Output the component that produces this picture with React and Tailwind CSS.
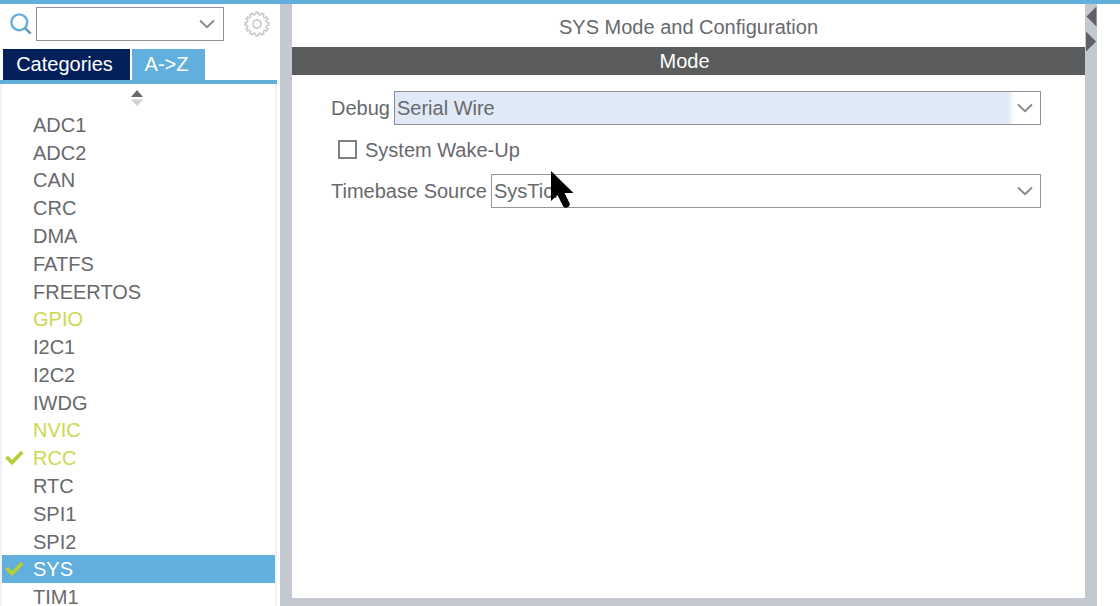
import React, { useState } from "react"

const peripherals = [
  { name: "ADC1" },
  { name: "ADC2" },
  { name: "CAN" },
  { name: "CRC" },
  { name: "DMA" },
  { name: "FATFS" },
  { name: "FREERTOS" },
  { name: "GPIO", active: true },
  { name: "I2C1" },
  { name: "I2C2" },
  { name: "IWDG" },
  { name: "NVIC", active: true },
  { name: "RCC", active: true, checked: true },
  { name: "RTC" },
  { name: "SPI1" },
  { name: "SPI2" },
  { name: "SYS", checked: true },
  { name: "TIM1" },
]

function Chevron({ className }) {
  return (
    <svg className={className} width="16" height="10" viewBox="0 0 16 10" fill="none" aria-hidden="true">
      <path d="M1 1.5 L8 8.2 L15 1.5" stroke="#85878a" strokeWidth="1.8" />
    </svg>
  )
}

function SearchIcon() {
  return (
    <svg width="22" height="22" viewBox="0 0 22 22" fill="none" aria-hidden="true">
      <circle cx="9.3" cy="9.3" r="7.9" stroke="#62afdd" strokeWidth="2.4" />
      <path d="M15 15 L20.7 20.7" stroke="#7499b3" strokeWidth="2.6" />
    </svg>
  )
}

function GearIcon() {
  const teeth = [0, 30, 60, 90, 120, 150, 180, 210, 240, 270, 300, 330]
  return (
    <svg width="26" height="26" viewBox="0 0 26 26" fill="none" stroke="#c9cacb" strokeWidth="1.7" aria-hidden="true">
      {teeth.map((deg) => (
        <path
          key={deg}
          transform={`rotate(${deg} 13 13)`}
          d="M10.4 3.7 Q11.5 3.5 11.6 2.6 L11.8 1.3 H14.2 L14.4 2.6 Q14.5 3.5 15.6 3.7"
        />
      ))}
      <circle cx="13" cy="13" r="4.1" strokeWidth="1.7" />
    </svg>
  )
}

function CheckMark() {
  return (
    <svg width="19" height="16" viewBox="0 0 19 16" fill="none" aria-hidden="true">
      <path d="M1.5 7 L7 12.6 L17.2 2" stroke="#b5cf36" strokeWidth="3.8" />
    </svg>
  )
}

function Pointer() {
  return (
    <svg
      className="pointer-events-none absolute left-[258px] top-[166px]"
      width="25"
      height="40"
      viewBox="0 0 25 40"
      aria-hidden="true"
    >
      <path d="M1 1 L1 31 L7.5 25 L13 36 Q14 38.5 17 37.5 Q20.5 36 19.5 33 L14.5 23 L23.5 23 Z" fill="#000" />
    </svg>
  )
}

function SelectField({ id, label, options, highlighted }) {
  return (
    <div className="flex h-[34px] items-center gap-1">
      <label htmlFor={id}>{label}</label>
      <div className="relative h-full flex-1">
        <select
          id={id}
          className={
            highlighted
              ? "h-full w-full appearance-none rounded-none border border-[#8d8f94] bg-linear-to-r from-[#e0eaf6] from-95% to-white to-96% pl-0.5 outline-none"
              : "h-full w-full appearance-none rounded-none border border-[#949699] bg-white pl-0.5 outline-none"
          }
        >
          {options.map((option) => (
            <option key={option}>{option}</option>
          ))}
        </select>
        <Chevron className="pointer-events-none absolute right-2 top-3" />
      </div>
    </div>
  )
}

function Sidebar() {
  const [selected, setSelected] = useState("SYS")

  return (
    <aside className="flex w-[280px] shrink-0 flex-col">
      <div className="flex items-center pl-[10px] pt-[3px]">
        <label htmlFor="search" className="w-[26px]" aria-label="Search">
          <SearchIcon />
        </label>
        <div className="flex h-[34px] w-[188px] items-center border border-[#8d8f92]">
          <input id="search" type="text" className="h-full min-w-0 flex-1 px-1 outline-none" />
          <button type="button" className="px-2" aria-label="Show history">
            <Chevron />
          </button>
        </div>
        <button type="button" className="ml-5" aria-label="Settings">
          <GearIcon />
        </button>
      </div>

      <div className="mr-[3px] mt-2 flex h-[35px] gap-0.5 border-b-4 border-[#60afdc] pl-[3px] text-white">
        <button type="button" className="w-[127px] bg-[#04205a] pb-0.5 pr-1">
          Categories
        </button>
        <button type="button" className="w-[73px] bg-[#60afdc] pb-0.5 pr-1">
          A-&gt;Z
        </button>
      </div>

      <div className="mr-[3px] flex min-h-0 flex-1 flex-col border-x-2 border-[#f1f2f5]">
        <button type="button" className="flex h-[27px] shrink-0 items-center justify-center pr-1" aria-label="Sort">
          <svg width="14" height="18" viewBox="0 0 14 18" aria-hidden="true">
            <path d="M7 1 L13 8 H1 Z" fill="#66686b" />
            <path d="M1 10.5 H13 L7 17 Z" fill="#d0d1d3" />
          </svg>
        </button>
        <ul className="grid h-[500px] shrink-0 auto-rows-fr">
          {peripherals.map((item) => {
            const isSelected = item.name === selected
            return (
              <li key={item.name}>
                <button
                  type="button"
                  onClick={() => setSelected(item.name)}
                  className={
                    isSelected
                      ? "flex h-full w-full items-center bg-[#60afdc] pl-[3px] text-white"
                      : item.active
                        ? "flex h-full w-full items-center pl-[3px] text-[#cbd950]"
                        : "flex h-full w-full items-center pl-[3px]"
                  }
                >
                  <span className="w-7">{item.checked && <CheckMark />}</span>
                  {item.name}
                </button>
              </li>
            )
          })}
        </ul>
      </div>
    </aside>
  )
}

function ModePanel() {
  return (
    <main className="relative flex-1 bg-white">
      <h1 className="flex h-[43px] items-center justify-center pt-0.5">SYS Mode and Configuration</h1>
      <h2 className="flex h-7 items-center justify-center bg-[#5b5c5e] pr-2 text-white">Mode</h2>
      <form className="flex flex-col gap-4 pl-[39px] pr-11 pt-4">
        <SelectField id="debug" label="Debug" options={["Serial Wire"]} highlighted />
        <div className="flex h-[17px] items-center gap-2 pl-[7px]">
          <input
            id="wakeup"
            type="checkbox"
            className="size-[19px] appearance-none border-2 border-[#7d7f82] bg-white checked:bg-[#60afdc]"
          />
          <label htmlFor="wakeup">System Wake-Up</label>
        </div>
        <SelectField id="timebase" label="Timebase Source" options={["SysTick"]} />
      </form>
      <Pointer />
    </main>
  )
}

export default function App() {
  return (
    <div className="flex h-screen overflow-hidden border-t-4 border-[#60afdc] bg-white font-['Liberation_Sans',Arial,sans-serif] text-[20px] leading-6 text-[#68696d]">
      <Sidebar />
      <div className="flex flex-1 border-b-8 border-l-12 border-[#c4c8d0]">
        <ModePanel />
        <div className="flex w-3 flex-col items-center gap-1 bg-[#c4c8d0] pt-0.5">
          <button type="button" aria-label="Collapse">
            <svg className="block" width="12" height="21" viewBox="0 0 12 21" aria-hidden="true">
              <path d="M11.5 0.5 V20.5 L1.5 10.5 Z" fill="#5f6165" />
            </svg>
          </button>
          <button type="button" aria-label="Expand">
            <svg className="block" width="12" height="21" viewBox="0 0 12 21" aria-hidden="true">
              <path d="M1 0.5 V20.5 L11 10.5 Z" fill="#5f6165" />
            </svg>
          </button>
        </div>
      </div>
      <div className="w-[23px] shrink-0" />
    </div>
  )
}
